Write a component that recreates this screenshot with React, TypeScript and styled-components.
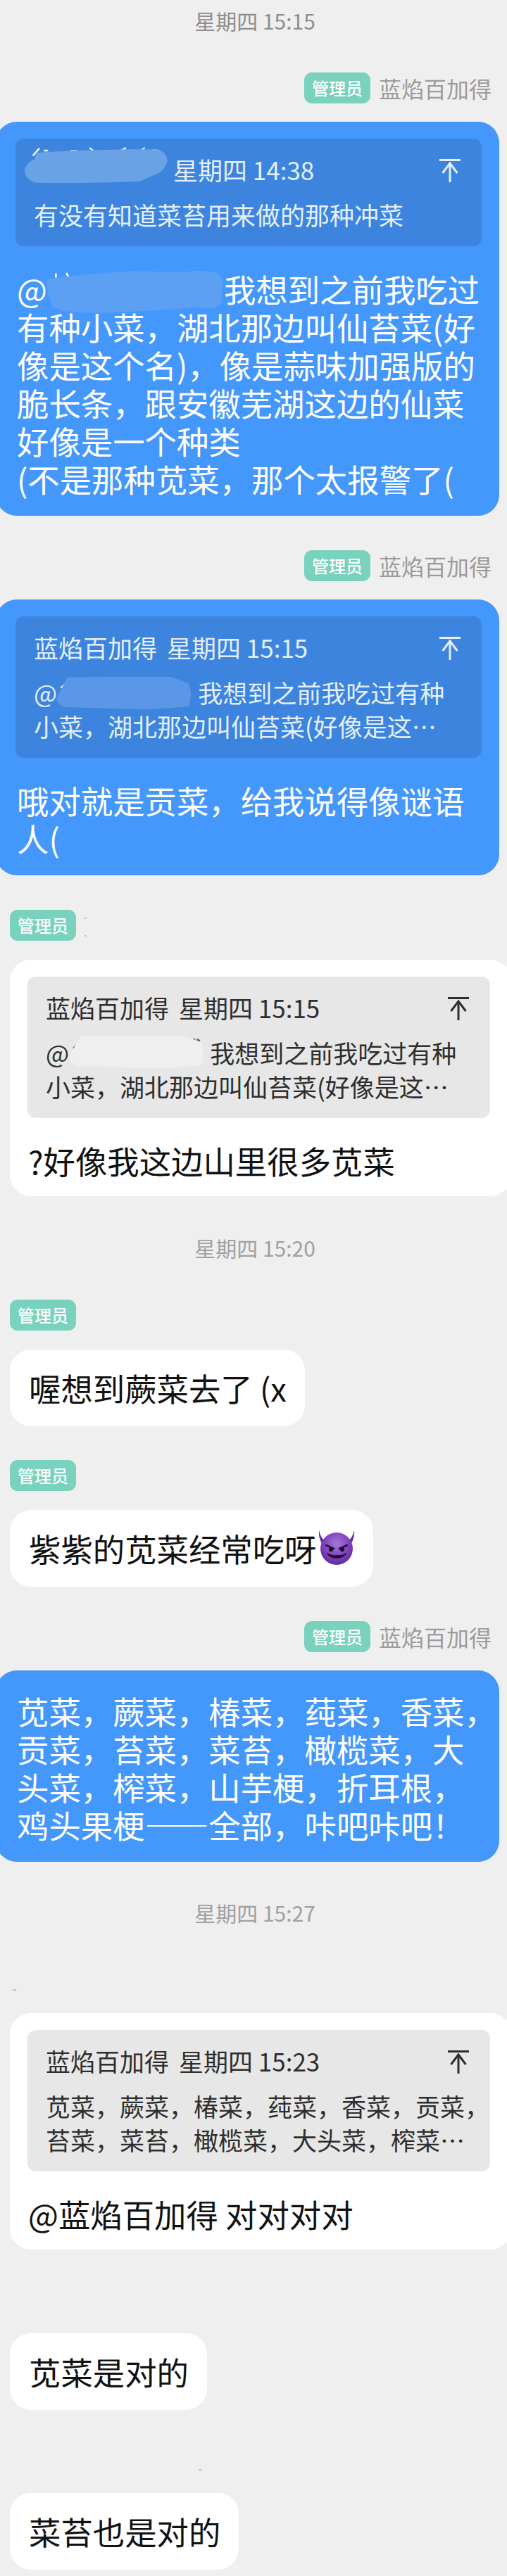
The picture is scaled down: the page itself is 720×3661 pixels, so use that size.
import React from "react";
import styled, { createGlobalStyle } from "styled-components";

const Global = createGlobalStyle`
  html, body { margin: 0; padding: 0; background: #efefef; }
  body { font-family: "Noto Sans CJK SC", "Noto Sans", sans-serif; overflow-x: hidden; }
`;

const Page = styled.main`
  position: relative;
  width: 720px;
  height: 3661px;
  padding-top: 9px;
  box-sizing: border-box;
  overflow: hidden;
  background: #efefef;
`;

const Timestamp = styled.div<{ $top?: number; $tone?: string }>`
  margin-top: ${(p) => p.$top ?? 0}px;
  height: 40px;
  line-height: 40px;
  text-align: center;
  font-size: 30px;
  color: ${(p) => p.$tone ?? "#8e8e8e"};
  padding-left: 4px;
`;

const Message = styled.section<{ $top: number; $mine?: boolean }>`
  position: relative;
  margin-top: ${(p) => p.$top}px;
  display: flex;
  flex-direction: column;
  gap: ${(p) => (p.$mine ? 26 : 27)}px;
`;

const SenderRow = styled.div<{ $mine?: boolean }>`
  display: flex;
  align-items: center;
  gap: 12px;
  height: 44px;
  justify-content: ${(p) => (p.$mine ? "flex-end" : "flex-start")};
  padding: ${(p) => (p.$mine ? "0 22px 0 0" : "0 0 0 14px")};
`;

const Badge = styled.span`
  width: 94px;
  height: 44px;
  border-radius: 11px;
  background: #79d2be;
  color: #fff;
  font-size: 24px;
  font-weight: 500;
  line-height: 44px;
  text-align: center;
`;

const SenderName = styled.span`
  font-size: 32px;
  line-height: 44px;
  color: #9b9b9b;
`;

const Speck = styled.i<{ $x: number; $y: number; $w?: number }>`
  position: absolute;
  left: ${(p) => p.$x}px;
  top: ${(p) => p.$y}px;
  width: ${(p) => p.$w ?? 3}px;
  height: 2px;
  border-radius: 1px;
  background: #bdbdbd;
`;

const MineBubble = styled.div<{ $plain?: boolean }>`
  box-sizing: border-box;
  margin: 0 11px 0 -6px;
  padding: ${(p) => (p.$plain ? 30 : 24)}px 22px 26px 30px;
  border-radius: 30px;
  background: #4497fb;
  color: #fff;
`;

const ReplyBubble = styled.div`
  box-sizing: border-box;
  width: 712px;
  margin-left: 14px;
  padding: 24px 0 24px 25px;
  border-radius: 30px;
  background: #fff;
  color: #111;
`;

const PlainBubble = styled.div`
  box-sizing: border-box;
  width: fit-content;
  margin-left: 14px;
  padding: 27px 26px 28px 27px;
  border-radius: 30px;
  background: #fff;
  color: #111;
`;

const Quote = styled.div<{ $mine?: boolean }>`
  box-sizing: border-box;
  width: ${(p) => (p.$mine ? "662px" : "657px")};
  margin-left: ${(p) => (p.$mine ? "-2px" : "0")};
  margin-bottom: 33px;
  padding: 20px 30px 21px 26px;
  border-radius: 12px;
  background: ${(p) => (p.$mine ? "#3d84de" : "#e7e7e7")};
  color: ${(p) => (p.$mine ? "#e4effd" : "#2e2e2e")};
  font-size: 35px;
  line-height: 48px;
`;

const QuoteHead = styled.div`
  display: flex;
  align-items: center;
  gap: 14px;
  height: 48px;
  margin-bottom: 16px;
  white-space: pre;
`;

const QuoteIcon = styled.svg`
  margin-left: auto;
  flex: none;
  width: 30px;
  height: 33px;
  margin-top: 3px;
  fill: none;
  stroke: currentColor;
  stroke-width: 3;
`;

const QuoteBody = styled.div`
  white-space: pre;
`;

const Text = styled.div<{ $inset?: number }>`
  padding-left: ${(p) => p.$inset ?? 0}px;
  font-size: 45.4px;
  line-height: 54px;
  white-space: pre;
`;

const Redacted = styled.span<{ $w: number }>`
  position: relative;
  display: inline-block;
  width: ${(p) => p.$w}px;
  height: 0;
`;

const Smear = styled.svg<{
  $x: number;
  $w: number;
  $h: number;
  $drop: number;
}>`
  position: absolute;
  left: ${(p) => p.$x}px;
  bottom: ${(p) => p.$drop}px;
  width: ${(p) => p.$w}px;
  height: ${(p) => p.$h}px;
  overflow: visible;
`;

const Emoji = styled.svg`
  width: 52px;
  height: 50px;
  vertical-align: top;
  margin: 2px 0 0 2px;
`;

const ArrowTop = () => (
  <QuoteIcon viewBox="0 0 30 33" aria-hidden="true">
    <path d="M0 1.5H30" />
    <path d="M15 6V33" />
    <path d="M4.5 20L15 6L25.5 20" />
  </QuoteIcon>
);

const Devil = () => (
  <Emoji viewBox="0 0 52 50" aria-hidden="true">
    <defs>
      <radialGradient id="devilFace" cx="50%" cy="35%" r="70%">
        <stop offset="0%" stopColor="#a678d6" />
        <stop offset="60%" stopColor="#7b3fb8" />
        <stop offset="100%" stopColor="#5c2b92" />
      </radialGradient>
    </defs>
    <path d="M1 0C3 8 6 13 12 16L7 22C3 16 0 8 1 0Z" fill="#6b34a6" />
    <path d="M51 0C49 8 46 13 40 16L45 22C49 16 52 8 51 0Z" fill="#6b34a6" />
    <circle cx="26" cy="26" r="23" fill="url(#devilFace)" />
    <path d="M11 21L22 26M41 21L30 26" stroke="#2a1145" strokeWidth="2.6" strokeLinecap="round" />
    <ellipse cx="18" cy="27" rx="3" ry="3.2" fill="#1d0b33" />
    <ellipse cx="34" cy="27" rx="3" ry="3.2" fill="#1d0b33" />
    <path d="M13 33C18 41 34 41 39 33C33 37 19 37 13 33Z" fill="#1d0b33" stroke="#1d0b33" strokeWidth="1.4" strokeLinejoin="round" />
  </Emoji>
);

const Admin = () => <Badge>管理员</Badge>;
const Me = () => (
  <SenderRow $mine>
    <Admin />
    <SenderName>蓝焰百加得</SenderName>
  </SenderRow>
);
const Them = () => (
  <SenderRow>
    <Admin />
  </SenderRow>
);

const Head = ({ name, time }: { name: React.ReactNode; time: string }) => (
  <QuoteHead>
    {name}
    <span>{time}</span>
    <ArrowTop />
  </QuoteHead>
);

/* Redaction smears: hand-painted blobs with the stray tips of the strokes they failed to hide. */
const blobShape = (d: string, tone: string, tips: string, tipTone: string) => (
  <>
    <path d={tips} fill="none" stroke={tipTone} strokeWidth="8" strokeLinecap="round" />
    <path d={d} fill={tone} stroke={tone} strokeWidth="14" strokeLinejoin="round" />
  </>
);

const SmearQuoteName = () => (
  <Smear $x={-14} $w={206} $h={55} $drop={-20} viewBox="48 36 618 165" aria-hidden="true">
    {blobShape(
      "M58 140Q70 112 98 104L108 76Q300 62 620 62Q652 78 652 104Q640 146 600 158L540 184Q300 194 100 190Q58 180 58 140Z",
      "#6aa2e6",
      "M88 80L112 52M135 60H148M250 62H272M330 50L345 62M440 72L480 50M470 60H512M545 62L560 50M600 58L622 62",
      "#e4effd"
    )}
  </Smear>
);

const SmearMention = () => (
  <Smear $x={-2} $w={253} $h={63} $drop={-16} viewBox="130 30 760 190" aria-hidden="true">
    {blobShape(
      "M140 78Q300 54 500 44L730 48Q770 36 850 48Q880 62 878 90L874 168Q850 200 790 184Q600 200 400 208Q280 212 200 200L165 186Q140 130 140 78Z",
      "#5ca0f3",
      "M172 50V62M218 48L226 62M160 150V166",
      "#ffffff"
    )}
  </Smear>
);

const SmearQuoteMention = ({ tone, tipTone, x, drop, light }: { tone: string; tipTone: string; x: number; drop: number; light?: boolean }) => (
  <Smear $x={x} $w={197} $h={48} $drop={drop} viewBox="110 20 590 145" aria-hidden="true">
    {blobShape(
      "M122 112Q140 80 165 32L300 30L600 30Q640 42 676 56Q692 100 676 144L500 156L150 146Q122 136 122 112Z",
      tone,
      light
        ? "M135 75L155 55M590 40H600M615 42H640M650 38L655 46M665 40L672 44"
        : "M135 68L155 50",
      tipTone
    )}
  </Smear>
);

export default function App() {
  return (
    <Page lang="zh-CN">
      <Global />
      <Timestamp>星期四 15:15</Timestamp>

      <Message $top={54} $mine>
        <Me />
        <MineBubble>
          <Quote $mine>
            <Head
              name={
                <Redacted $w={184}>
                  <SmearQuoteName />
                </Redacted>
              }
              time="星期四 14:38"
            />
            <QuoteBody>有没有知道菜苔用来做的那种冲菜</QuoteBody>
          </Quote>
          <Text>
            @
            <Redacted $w={251}>
              <SmearMention />
            </Redacted>
            {"我想到之前我吃过\n有种小菜，湖北那边叫仙苔菜(好\n像是这个名)，像是蒜味加强版的\n脆长条，跟安徽芜湖这边的仙菜\n好像是一个种类\n(不是那种苋菜，那个太报警了("}
          </Text>
        </MineBubble>
      </Message>

      <Message $top={49} $mine>
        <Me />
        <MineBubble>
          <Quote $mine>
            <Head name={<span>蓝焰百加得</span>} time="星期四 15:15" />
            <QuoteBody>
              @
              <Redacted $w={200}>
                <SmearQuoteMention x={-3} drop={-10} tone="#5b97e6" tipTone="#e4effd" />
              </Redacted>
              {"我想到之前我吃过有种\n小菜，湖北那边叫仙苔菜(好像是这…"}
            </QuoteBody>
          </Quote>
          <Text>{"哦对就是贡菜，给我说得像谜语\n人("}</Text>
        </MineBubble>
      </Message>

      <Message $top={49}>
        <Them />
        <Speck $x={120} $y={11} />
        <Speck $x={120} $y={36} />
        <ReplyBubble>
          <Quote>
            <Head name={<span>蓝焰百加得</span>} time="星期四 15:15" />
            <QuoteBody>
              @
              <Redacted $w={200}>
                <SmearQuoteMention x={-2} drop={-8} tone="#efefef" tipTone="#555" light />
              </Redacted>
              {"我想到之前我吃过有种\n小菜，湖北那边叫仙苔菜(好像是这…"}
            </QuoteBody>
          </Quote>
          <Text $inset={1}>?好像我这边山里很多苋菜</Text>
        </ReplyBubble>
      </Message>

      <Timestamp $top={53} $tone="#a0a0a0">星期四 15:20</Timestamp>

      <Message $top={54}>
        <Them />
        <PlainBubble>
          <Text>喔想到蕨菜去了 (x</Text>
        </PlainBubble>
      </Message>

      <Message $top={48}>
        <Them />
        <PlainBubble>
          <Text>
            紫紫的苋菜经常吃呀
            <Devil />
          </Text>
        </PlainBubble>
      </Message>

      <Message $top={49} $mine>
        <Me />
        <MineBubble $plain>
          <Text>
            {"苋菜，蕨菜，椿菜，莼菜，香菜，\n贡菜，苔菜，菜苔，橄榄菜，大\n头菜，榨菜，山芋梗，折耳根，\n鸡头果梗——全部，咔吧咔吧！"}
          </Text>
        </MineBubble>
      </Message>

      <Timestamp $top={52} $tone="#a0a0a0">星期四 15:27</Timestamp>

      <Message $top={123}>
        <Speck $x={18} $y={-34} $w={5} />
        <ReplyBubble>
          <Quote>
            <Head name={<span>蓝焰百加得</span>} time="星期四 15:23" />
            <QuoteBody>{"苋菜，蕨菜，椿菜，莼菜，香菜，贡菜，\n苔菜，菜苔，橄榄菜，大头菜，榨菜…"}</QuoteBody>
          </Quote>
          <Text $inset={1}>@蓝焰百加得 对对对对</Text>
        </ReplyBubble>
      </Message>

      <Message $top={119}>
        <PlainBubble>
          <Text>苋菜是对的</Text>
        </PlainBubble>
      </Message>

      <Message $top={118}>
        <Speck $x={282} $y={-34} $w={5} />
        <PlainBubble>
          <Text>菜苔也是对的</Text>
        </PlainBubble>
      </Message>
    </Page>
  );
}
